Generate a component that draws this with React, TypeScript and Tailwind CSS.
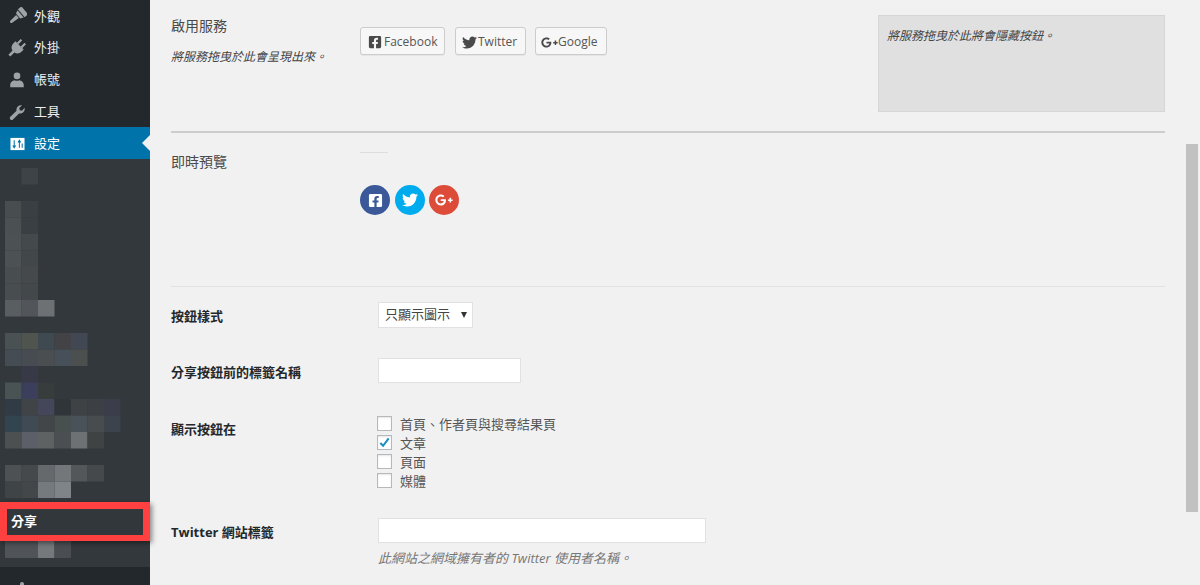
import { FaFacebookSquare, FaTwitter, FaGooglePlusG } from "react-icons/fa";

const cellX = [5, 21.5, 38, 54.5, 71, 87.5, 104];

// blurred part of the admin menu: [column, row, colour]
const mosaic: [number, number, string][] = [
  [1, 0, "#3e4347"],
  [0, 2, "#484d50"], [1, 2, "#3a3f43"],
  [0, 3, "#4b5053"], [1, 3, "#3a3f43"],
  [0, 4, "#4c5154"], [1, 4, "#44494c"],
  [0, 5, "#4c5154"], [1, 5, "#42474a"],
  [0, 6, "#484d50"], [1, 6, "#45494c"],
  [0, 7, "#484d50"], [1, 7, "#43484b"],
  [0, 8, "#595e61"], [1, 8, "#52565a"], [2, 8, "#6d7174"],
  [0, 10, "#4a5153"], [1, 10, "#50544f"], [2, 10, "#3f4a50"], [3, 10, "#434347"], [4, 10, "#414853"],
  [0, 11, "#454c54"], [1, 11, "#474c53"], [2, 11, "#4a4e50"], [3, 11, "#475059"], [4, 11, "#4b4f4e"],
  [1, 12, "#373a46"],
  [0, 13, "#4a5354"], [1, 13, "#3c3f5b"], [2, 13, "#373d3d"],
  [0, 14, "#313b46"], [1, 14, "#414447"], [2, 14, "#444759"], [3, 14, "#303539"], [4, 14, "#3e4245"], [5, 14, "#3c3f44"], [6, 14, "#3b3d4a"],
  [0, 15, "#324450"], [1, 15, "#3f4a55"], [2, 15, "#434649"], [3, 15, "#484f4f"], [4, 15, "#495159"], [5, 15, "#484c4e"], [6, 15, "#3d434c"],
  [0, 16, "#4d5051"], [1, 16, "#5c5f68"], [2, 16, "#5f6263"], [3, 16, "#4b4f51"], [4, 16, "#6d7174"], [5, 16, "#3f4344"],
  [0, 18, "#4d5154"], [1, 18, "#45494c"], [2, 18, "#65696c"], [3, 18, "#73777a"], [4, 18, "#53575a"], [5, 18, "#46494c"],
  [0, 19, "#3f4447"], [1, 19, "#43474a"], [2, 19, "#747a7d"], [3, 19, "#7e8488"],
];

const BrushIcon = () => (
  <svg viewBox="0 0 20 20" className="w-[19px] h-[19px]" fill="#9ea3a8">
    <g transform="rotate(50 10 10)">
      <path d="M4.5 0h11v4.8h-11z" />
      <path d="M5 5.8h10l-1.6 3.4H6.6z" />
      <path d="M7.8 10h4.4l-.7 8.6c-.1 1.6-2.9 1.6-3 0z" />
    </g>
  </svg>
);

const PluginIcon = () => (
  <svg viewBox="0 0 20 20" className="w-[18px] h-[18px]" fill="#9ea3a8">
    <g transform="rotate(45 10 10)">
      <path d="M5.8 0h2.4v6H5.8zM11.8 0h2.4v6h-2.4z" />
      <path d="M3.5 6h13v3.5c0 3.2-2.3 5.6-5 6.1V22h-3v-6.4c-2.7-.5-5-2.9-5-6.1z" />
    </g>
  </svg>
);

const UserIcon = () => (
  <svg viewBox="0 0 20 20" className="w-[18px] h-[18px]" fill="#9ea3a8">
    <circle cx="10" cy="5.5" r="3.7" />
    <path d="M2.5 15.5c0-3.2 2.8-5 4.8-5.3 1.5 1 3.9 1 5.4 0 2 .3 4.8 2.1 4.8 5.3V18H2.5z" />
  </svg>
);

const WrenchIcon = () => (
  <svg viewBox="0 0 20 20" className="w-[18px] h-[18px]" fill="#9ea3a8">
    <path d="M18.4 5.4c.5 1.8 0 3.7-1.4 5-1.3 1.2-3.1 1.6-4.7 1.2l-6.8 6.6c-.8.8-2.1.8-2.9 0-.8-.8-.8-2.1 0-2.9l6.9-6.7c-.4-1.7.1-3.5 1.4-4.8 1.3-1.2 3.1-1.7 4.8-1.2l-3.2 3 .6 2.5 2.5.6z" />
  </svg>
);

const SettingsIcon = () => (
  <svg viewBox="0 0 16 14" className="w-[15px] h-[14px]">
    <rect x="0.5" y="0.5" width="15" height="13" fill="#ffffff" />
    <path d="M4.5 3v7.5M3 8.5l1.5 2.5L6 8.5M10 11V3.5M8.5 5.5L10 3l1.5 2.5M13 6.5V11" stroke="#0073aa" strokeWidth="1.1" fill="none" />
  </svg>
);

const menuItems = [
  { label: "外觀", icon: <BrushIcon />, rowClass: "h-[31px]" },
  { label: "外掛", icon: <PluginIcon />, rowClass: "h-8" },
  { label: "帳號", icon: <UserIcon />, rowClass: "h-8" },
  { label: "工具", icon: <WrenchIcon />, rowClass: "h-8" },
];

const Sidebar = () => (
  <aside className="relative w-[150px] h-[585px] shrink-0 flex flex-col bg-[#23282d]">
    {menuItems.map(item => (
      <div key={item.label} className={`flex items-center pt-[2px] text-[13px] text-[#eeeeee] ${item.rowClass}`}>
        <span className="w-[34px] pl-2 shrink-0">{item.icon}</span>
        <span>{item.label}</span>
      </div>
    ))}
    <div className="relative h-8 flex items-center pt-[2px] bg-[#0073aa] text-[13px] text-white">
      <span className="w-[34px] pl-[10px] shrink-0 flex"><SettingsIcon /></span>
      <span>設定</span>
      <span className="absolute right-0 top-[8px] border-y-[8px] border-r-[8px] border-y-transparent border-r-[#f1f1f1]" />
    </div>
    <div className="flex flex-col h-[408px] bg-[#33383c]">
      <svg width="150" height="343" viewBox="0 159 150 343" className="block shrink-0">
        {mosaic.map(([col, row, color]) => (
          <rect key={`${col}-${row}`} x={cellX[col]} y={168 + row * 16.5} width="16.5" height="16.5" fill={color} />
        ))}
      </svg>
      <div className="relative z-10 h-[39px] w-[150px] shrink-0 flex items-center border-x-[7px] border-t-[7px] border-b-[6px] border-[#ff4040] bg-[#32373c] pl-[4px] text-[13px] font-bold text-white shadow-[2px_2px_5px_rgba(0,0,0,0.45)]">
        分享
      </div>
      <svg width="150" height="26" viewBox="0 0 150 26" className="block shrink-0">
        <rect x="5" y="0" width="33" height="17" fill="#505458" />
        <rect x="38" y="0" width="16.5" height="17" fill="#75797c" />
        <rect x="54.5" y="0" width="16.5" height="17" fill="#4a4e52" />
      </svg>
    </div>
    <div className="flex-1 pl-[20px] pt-[15px]">
      <div className="w-[4px] h-[3px] rounded-t-full bg-[#9ea3a8]" />
    </div>
  </aside>
);

const serviceButtonClass =
  "h-7 flex items-center rounded-[3px] border border-[#cccccc] bg-[#f7f7f7] text-[12px] text-[#555555] shadow-[0_1px_0_#e5e5e5]";

const checkOptions = [
  { label: "首頁、作者頁與搜尋結果頁", checked: false },
  { label: "文章", checked: true },
  { label: "頁面", checked: false },
  { label: "媒體", checked: false },
];

const textInputClass = "block h-[25px] border border-[#e1e1e1] bg-white outline-none";
const fieldLabelClass = "w-[207px] shrink-0 pt-1 text-[13px] font-bold text-[#23282d]";

const Content = () => (
  <main className="flex-1 min-w-0 pl-[21px] text-[#444444]">
    <section className="h-[131px] flex">
      <div className="w-[189px] shrink-0 pt-[15px]">
        <h3 className="text-[14px] leading-[22px] text-[#4a4a4a]">啟用服務</h3>
        <p className="mt-[10px] text-[12px] leading-5 italic text-[#444444]">將服務拖曳於此會呈現出來。</p>
      </div>
      <div className="pt-[27px] flex items-start">
        <div className={`${serviceButtonClass} w-[85px] pl-[7px] gap-[2px] pt-[2px]`}>
          <FaFacebookSquare className="text-[14px] text-[#4a4a4a]" />
          <span>Facebook</span>
        </div>
        <div className={`${serviceButtonClass} w-[71px] ml-[10px] pl-[6px] gap-[1px] pt-[2px]`}>
          <FaTwitter className="text-[15px] text-[#4a4a4a]" />
          <span>Twitter</span>
        </div>
        <div className={`${serviceButtonClass} w-[72px] ml-[9px] pl-[5px] pt-[2px]`}>
          <FaGooglePlusG className="text-[17px] text-[#4a4a4a]" />
          <span>Google</span>
        </div>
      </div>
      <div className="ml-auto mt-[15px] w-[287px] h-[97px] border border-[#d6d6d6] bg-[#e0e0e0] pl-[8px] pt-[10px] text-[12px] leading-5 italic text-[#444444]">
        將服務拖曳於此將會隱藏按鈕。
      </div>
    </section>
    <div className="h-[2px] bg-[#cccccc]" />

    <section className="h-[153px] flex">
      <h3 className="w-[189px] shrink-0 pt-[18px] text-[14px] leading-[22px] text-[#4a4a4a]">即時預覽</h3>
      <div>
        <div className="mt-[19px] h-px w-[28px] bg-[#dddddd]" />
        <div className="mt-[32px] flex gap-[4.6px]">
          <span className="w-[30px] h-[30px] rounded-full bg-[#3b5998] flex items-center justify-center">
            <FaFacebookSquare className="text-[15px] text-white" />
          </span>
          <span className="w-[30px] h-[30px] rounded-full bg-[#00aced] flex items-center justify-center">
            <FaTwitter className="text-[16px] text-white" />
          </span>
          <span className="w-[30px] h-[30px] rounded-full bg-[#dd4b39] flex items-center justify-center">
            <FaGooglePlusG className="text-[18px] text-white" />
          </span>
        </div>
      </div>
    </section>
    <div className="h-px bg-[#e1e1e1]" />

    <div className="mt-[15px] flex items-center">
      <label className={fieldLabelClass}>按鈕樣式</label>
      <div className="w-[95px] h-[26px] flex items-center justify-between border border-[#e1e1e1] bg-white pl-[6px] pr-[5px] text-[13px] text-[#444444]">
        <span>只顯示圖示</span>
        <span className="border-x-[3.5px] border-t-[6px] border-x-transparent border-t-[#333333]" />
      </div>
    </div>

    <div className="mt-[30px] flex items-center">
      <label className={fieldLabelClass}>分享按鈕前的標籤名稱</label>
      <input className={`${textInputClass} w-[143px]`} />
    </div>

    <div className="mt-[33px] flex items-start">
      <label className="w-[206px] shrink-0 pt-[3px] text-[13px] leading-5 font-bold text-[#23282d]">顯示按鈕在</label>
      <div className="flex flex-col">
        {checkOptions.map(option => (
          <div key={option.label} className="h-[19px] flex items-start text-[13px] leading-[17px] text-[#555555]">
            <span className="w-[15px] h-[15px] shrink-0 flex items-center justify-center border border-[#b4b9be] bg-white shadow-[inset_0_1px_2px_rgba(0,0,0,0.1)]">
              {option.checked && (
                <svg viewBox="0 0 14 14" className="w-[13px] h-[13px]" fill="none" stroke="#1e8cbe" strokeWidth="2.2">
                  <path d="M2.5 7.5l3 3 6-8" />
                </svg>
              )}
            </span>
            <span className="ml-2">{option.label}</span>
          </div>
        ))}
      </div>
    </div>

    <div className="mt-[26px] flex items-center">
      <label className={fieldLabelClass}>Twitter 網站標籤</label>
      <input className={`${textInputClass} w-[328px]`} />
    </div>
    <p className="mt-[5px] ml-[207px] text-[13px] leading-5 italic text-[#777777]">此網站之網域擁有者的 Twitter 使用者名稱。</p>
  </main>
);

export default function App() {
  return (
    <div className="flex h-[585px] w-[1200px] overflow-hidden bg-[#f1f1f1] font-['Open_Sans','Noto_Sans_CJK_TC',sans-serif]">
      <Sidebar />
      <Content />
      {/* page scrollbar */}
      <div className="w-[35px] shrink-0 pl-[21px] pt-[144px]">
        <div className="w-3 h-[368px] bg-[#c1c1c1]" />
      </div>
    </div>
  );
}
